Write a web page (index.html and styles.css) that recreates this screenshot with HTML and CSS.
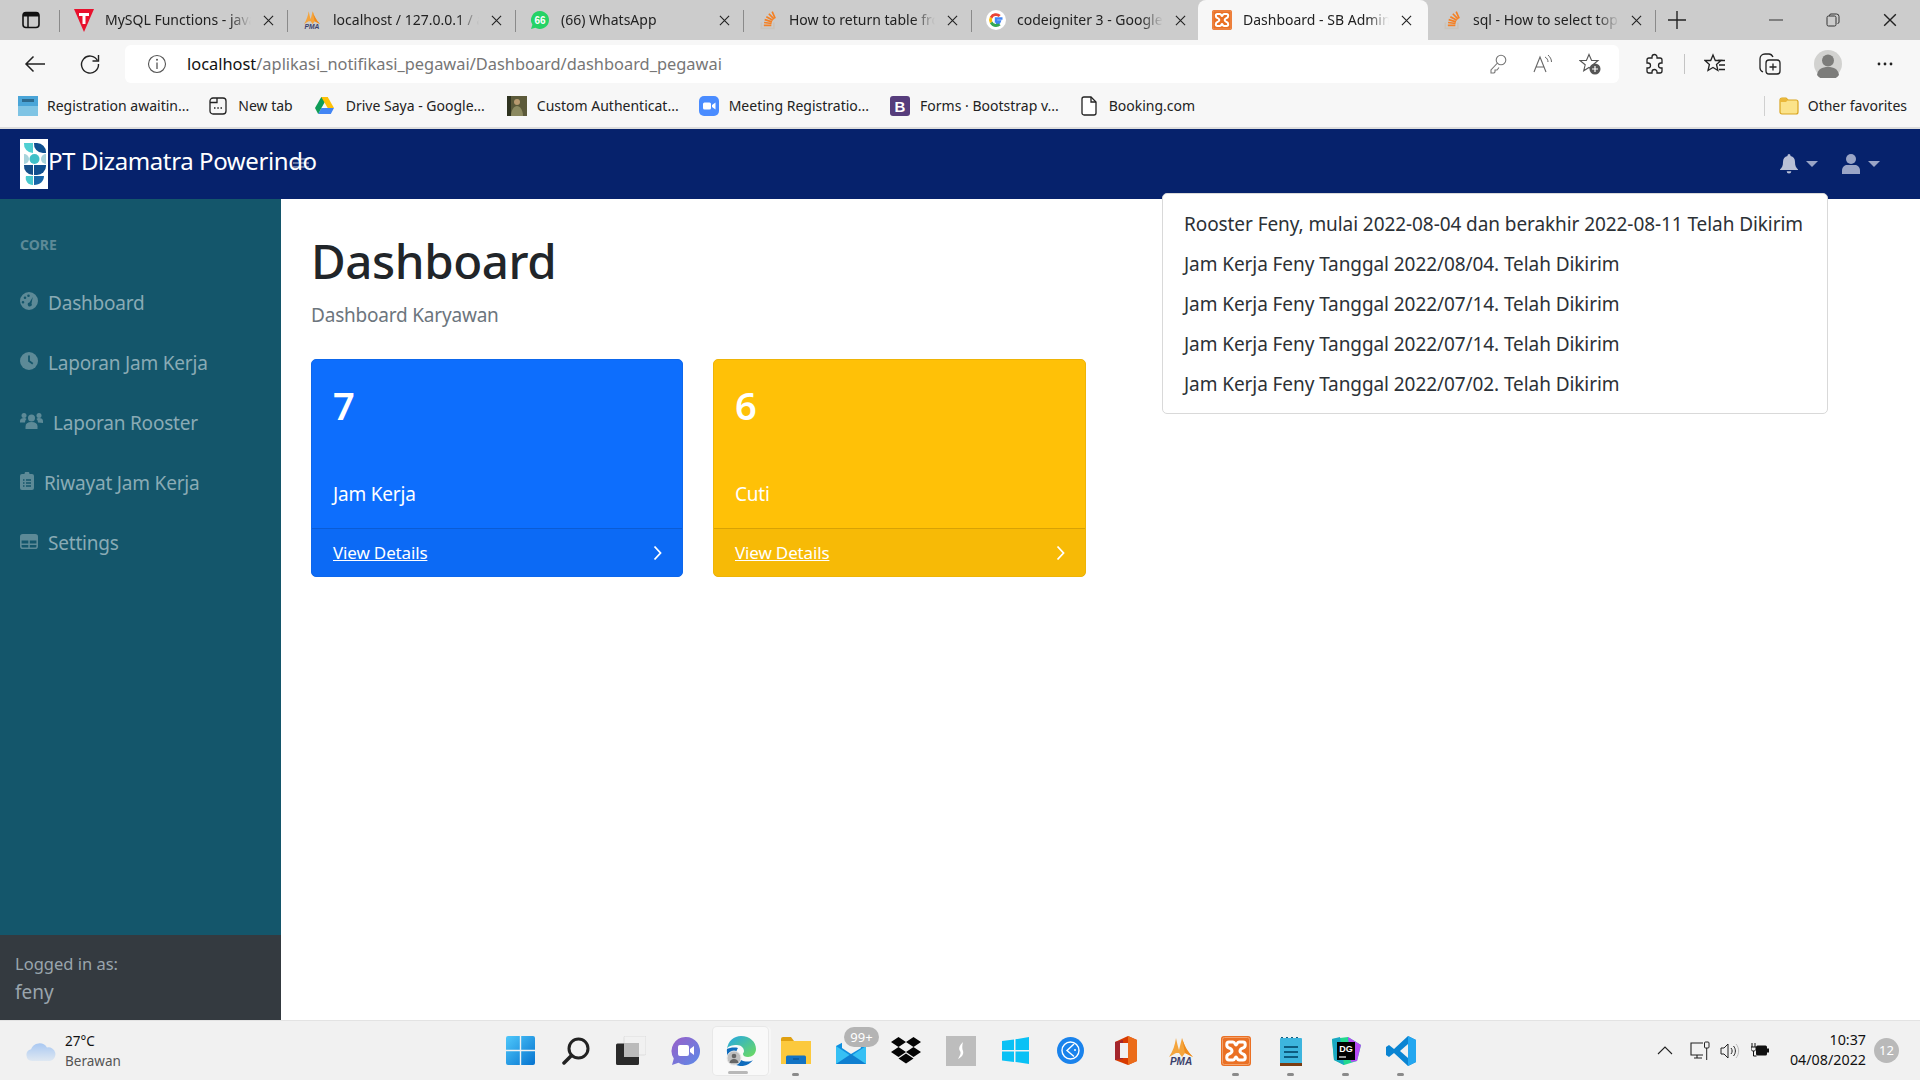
FILE: index.html
```html
<!DOCTYPE html>
<html>
<head>
<meta charset="utf-8">
<title>Dashboard - SB Admin</title>
<link rel="stylesheet" href="styles.css">
</head>
<body>
<svg class="defs" width="0" height="0">
  <symbol id="so" viewBox="0 0 24 24">
    <path d="M4 15v7h15v-7" fill="none" stroke="#c9c4bc" stroke-width="2"/>
    <path d="M7 18.500h9M7.300 15l9 1.200M8 11.500l8.800 2.700M10 8l7.800 4.400M13 4.500l6.300 6.500M17 2l3.600 8" fill="none" stroke="#f48024" stroke-width="2"/>
  </symbol>
  <symbol id="pma" viewBox="0 0 30 30">
    <path d="M3 21C7 15 9 9 10 2c1 5 2 9 3 12 1-4 2-8 3-12 2 7 5 13 11 19l-8-4-3 4-3-4-3 0z" fill="#f4a43c"/>
    <path d="M16 2c2 7 5 13 11 19l-8-4z" fill="#ee8a1c"/>
    <text x="15" y="29" text-anchor="middle" class="pma-text">PMA</text>
  </symbol>
  <symbol id="xampp" viewBox="0 0 30 30">
    <rect width="30" height="30" rx="3" fill="#ea7024"/>
    <rect x="1.500" y="1.500" width="27" height="27" rx="2" fill="none" stroke="#f3a26c" stroke-width="1"/>
    <path d="M8 6h4c2 0 2 3 3 3s1-3 3-3h4c3 0 3 5 0 6-1 .5-3 1-3 3s2 2.500 3 3c3 1 3 6 0 6h-4c-2 0-2-3-3-3s-1 3-3 3H8c-3 0-3-5 0-6 1-.5 3-1 3-3s-2-2.500-3-3C5 11 5 6 8 6z" fill="none" stroke="#fff" stroke-width="3"/>
  </symbol>
  <symbol id="caret" viewBox="0 0 12 6"><path d="M0 0h12L6 6z"/></symbol>
  <symbol id="x" viewBox="0 0 12 12"><path d="M1 1l10 10M11 1L1 11" fill="none" stroke="#222" stroke-width="1.200"/></symbol>
  <symbol id="chev" viewBox="0 0 9 16"><path d="M1.500 1.500L7.500 8l-6 6.500" fill="none" stroke="#fff" stroke-width="1.800"/></symbol>
</svg>

<div class="tabstrip">
  <div class="tabmenu">
    <svg width="18" height="18" viewBox="0 0 18 18"><rect x="1" y="1.500" width="16" height="15" rx="3" fill="none" stroke="#111" stroke-width="1.600"/><path d="M1 3.500a2 2 0 012-2h12a2 2 0 012 2v2H1z" fill="#111"/><path d="M6 5v11" stroke="#111" stroke-width="1.500"/></svg>
  </div>
  <div class="tab">
    <svg width="20" height="24" viewBox="0 0 20 24"><path d="M0 1h20L10 24z" fill="#e8112d"/><path d="M5 5h10v3h-3.500v8h-3V8H5z" fill="#fff"/></svg>
    <span class="tabname">MySQL Functions - javatpoint</span>
    <svg class="tabx" width="11" height="11"><use href="#x"/></svg>
  </div>
  <div class="tab">
    <svg width="20" height="22"><use href="#pma"/></svg>
    <span class="tabname">localhost / 127.0.0.1 / aplikasi</span>
    <svg class="tabx" width="11" height="11"><use href="#x"/></svg>
  </div>
  <div class="tab">
    <svg width="20" height="20" viewBox="0 0 20 20"><path d="M10 1a9 9 0 00-7.600 13.800L1 19l4.300-1.300A9 9 0 1010 1z" fill="#25d366"/><text x="10" y="13.500" text-anchor="middle" class="wa-text">66</text></svg>
    <span class="tabname">(66) WhatsApp</span>
    <svg class="tabx" width="11" height="11"><use href="#x"/></svg>
  </div>
  <div class="tab">
    <svg width="20" height="20"><use href="#so"/></svg>
    <span class="tabname">How to return table from a function</span>
    <svg class="tabx" width="11" height="11"><use href="#x"/></svg>
  </div>
  <div class="tab tab-noline">
    <svg width="20" height="20" viewBox="0 0 20 20"><circle cx="10" cy="10" r="10" fill="#fff"/><path d="M16.500 8.500H10v3h3.700a4 4 0 01-3.700 2.500" fill="none" stroke="#4285f4" stroke-width="2.400"/><path d="M10 14a4 4 0 01-3.700-2.500l-2.400 1.800A7 7 0 0010 17a7 7 0 004.700-1.800l-2-1.700" fill="#34a853"/><path d="M6.300 11.500a4 4 0 010-3L3.900 6.700a7 7 0 000 6.600z" fill="#fbbc05"/><path d="M6.300 8.500A4 4 0 0112.700 7l2-2A7 7 0 003.900 6.700z" fill="#ea4335"/></svg>
    <span class="tabname">codeigniter 3 - Google Search</span>
    <svg class="tabx" width="11" height="11"><use href="#x"/></svg>
  </div>
  <div class="tab tab-active">
    <svg width="20" height="20"><use href="#xampp"/></svg>
    <span class="tabname">Dashboard - SB Admin</span>
    <svg class="tabx" width="11" height="11"><use href="#x"/></svg>
  </div>
  <div class="tab">
    <svg width="20" height="20"><use href="#so"/></svg>
    <span class="tabname">sql - How to select top 1 row</span>
    <svg class="tabx" width="11" height="11"><use href="#x"/></svg>
  </div>
  <div class="newtab">
    <svg width="18" height="18" viewBox="0 0 18 18"><path d="M9 0v18M0 9h18" stroke="#222" stroke-width="1.400"/></svg>
  </div>
  <div class="winbtns">
    <svg width="14" height="14" viewBox="0 0 14 14"><path d="M0 7h14" stroke="#333" stroke-width="1"/></svg>
    <svg width="14" height="14" viewBox="0 0 14 14"><rect x="1" y="3" width="9" height="10" rx="1.500" fill="none" stroke="#333"/><path d="M3.500 3V2.500A1.500 1.500 0 015 1h5.500A2.500 2.500 0 0113 3.500V9a1.500 1.500 0 01-1.500 1.500" fill="none" stroke="#333"/></svg>
    <svg width="14" height="14"><use href="#x"/></svg>
  </div>
</div>

<div class="toolbar">
  <svg class="nav-back" width="22" height="18" viewBox="0 0 22 18"><path d="M21 9H2M9.500 1.500L2 9l7.500 7.500" fill="none" stroke="#222" stroke-width="1.500"/></svg>
  <svg class="nav-reload" width="22" height="22" viewBox="0 0 22 22"><path d="M18.500 7.500A8.500 8.500 0 1019.500 11" fill="none" stroke="#222" stroke-width="1.400"/><path d="M19.500 2v6h-6" fill="none" stroke="#222" stroke-width="1.400"/></svg>
  <div class="addressbar">
    <svg class="info" width="20" height="20" viewBox="0 0 20 20"><circle cx="10" cy="10" r="8.500" fill="none" stroke="#555" stroke-width="1.100"/><path d="M10 8.500V15" stroke="#555" stroke-width="1.300"/><circle cx="10" cy="5.800" r="1" fill="#555"/></svg>
    <span class="url"><span class="url-host">localhost</span>/aplikasi_notifikasi_pegawai/Dashboard/dashboard_pegawai</span>
    <svg class="addr-ico" width="18" height="20" viewBox="0 0 18 20"><circle cx="12" cy="6" r="4.800" fill="none" stroke="#777" stroke-width="1.100"/><path d="M8.500 9L2 16v3h3l1-1v-2h2l2-2.500" fill="none" stroke="#777" stroke-width="1.100"/></svg>
    <svg class="addr-ico" width="20" height="20" viewBox="0 0 20 20"><path d="M1 18L7 3l6 15M3.300 13h7.500" fill="none" stroke="#666" stroke-width="1.100"/><path d="M12 3c2 1 3 3 3 5M15 1c2 2 3.500 4 3.500 7" fill="none" stroke="#666" stroke-width="1"/></svg>
    <svg class="addr-ico" width="22" height="22" viewBox="0 0 22 22"><path d="M10 1.500l2.600 6h6.400l-5 4.300 1.500 6-5.500-3.300-5.300 3.300 1.500-6L1 7.500h6.400z" fill="none" stroke="#555" stroke-width="1.100"/><circle cx="16" cy="16" r="5.500" fill="#555"/><path d="M16 13v6M13 16h6" stroke="#fff" stroke-width="1.200"/></svg>
  </div>
  <svg class="tool-ext" width="20" height="22" viewBox="0 0 20 22"><path d="M8 4a2.500 2.500 0 015 0v1h3a2 2 0 012 2v3h-1a2.500 2.500 0 000 5h1v3a2 2 0 01-2 2h-3v-1a2.500 2.500 0 00-5 0v1H5a2 2 0 01-2-2v-3h1a2.500 2.500 0 000-5H3V7a2 2 0 012-2h3z" fill="none" stroke="#222" stroke-width="1.300"/></svg>
  <span class="tool-sep"></span>
  <svg class="tool-fav" width="22" height="22" viewBox="0 0 22 22"><path d="M9 2l2.300 5.500H17l-4.500 4 1.400 6L9 14.500 4 17.500l1.400-6L1 7.500h5.700z" fill="none" stroke="#222" stroke-width="1.300"/><path d="M14 7.500h7M15 12h6M15 16.500h6" stroke="#222" stroke-width="1.300"/></svg>
  <svg class="tool-coll" width="22" height="24" viewBox="0 0 22 24"><rect x="7" y="8" width="14" height="14" rx="3" fill="none" stroke="#222" stroke-width="1.300"/><path d="M14 11.500v7M10.500 15h7" stroke="#222" stroke-width="1.300"/><path d="M4 20c-2-1-3-2-3-4V7c0-3 2-5 5-5h4c2 0 3 1 4 3" fill="none" stroke="#222" stroke-width="1.300"/></svg>
  <svg class="tool-user" width="28" height="28" viewBox="0 0 28 28"><circle cx="14" cy="14" r="14" fill="#d2d2d0"/><circle cx="14" cy="10.500" r="6" fill="#7c7c7a"/><path d="M3 25c1-6 5-8 11-8s10 2 11 8a14 14 0 01-22 0z" fill="#7c7c7a"/></svg>
  <svg class="tool-dots" width="16" height="4" viewBox="0 0 16 4"><circle cx="2" cy="2" r="1.400" fill="#222"/><circle cx="8" cy="2" r="1.400" fill="#222"/><circle cx="14" cy="2" r="1.400" fill="#222"/></svg>
</div>

<div class="bookmarks">
  <a class="bm bm-reg"><svg width="20" height="20" viewBox="0 0 20 20"><rect width="20" height="20" fill="#4aa5d8"/><rect y="10" width="20" height="10" fill="#7fc4e4"/><rect x="4" y="3" width="12" height="3" fill="#2d6b8f"/></svg>Registration awaitin...</a>
  <a class="bm bm-new"><svg width="18" height="18" viewBox="0 0 18 18"><rect x="1" y="1" width="16" height="16" rx="3" fill="none" stroke="#222" stroke-width="1.300"/><path d="M1 5.500h7V1" fill="none" stroke="#222" stroke-width="1.300"/><path d="M5 11h1.500M8.300 11h1.500M11.500 11H13" stroke="#222" stroke-width="1.500"/></svg>New tab</a>
  <a class="bm bm-drive"><svg width="19" height="17" viewBox="0 0 19 17"><path d="M6.300 0h6.400l-6.300 11H0z" fill="#0f9d58"/><path d="M12.700 0L19 11h-6.300L6.300 0z" fill="#ffc107"/><path d="M3.200 17L6.400 11H19l-3.200 6z" fill="#4285f4"/><path d="M0 11h6.400l-3.200 6z" fill="#0f9d58"/></svg>Drive Saya - Google...</a>
  <a class="bm bm-custom"><svg width="20" height="20" viewBox="0 0 20 20"><rect width="20" height="20" fill="#5c5a3a"/><circle cx="10" cy="6" r="3" fill="#b89a70"/><path d="M4 20c0-6 3-10 6-10s6 4 6 10z" fill="#8c8a60"/><rect width="4" height="20" fill="#2f3320"/></svg>Custom Authenticat...</a>
  <a class="bm bm-zoom"><svg width="20" height="20" viewBox="0 0 20 20"><rect width="20" height="20" rx="5" fill="#4a8cff"/><rect x="4" y="6.500" width="8" height="7" rx="1.500" fill="#fff"/><path d="M13 9l3.500-2.500v7L13 11z" fill="#fff"/></svg>Meeting Registratio...</a>
  <a class="bm bm-boot"><svg width="20" height="20" viewBox="0 0 20 20"><rect width="20" height="20" rx="3" fill="#563d7c"/><text x="10" y="15.500" text-anchor="middle" class="boot-text">B</text></svg>Forms · Bootstrap v...</a>
  <a class="bm bm-doc"><svg width="16" height="20" viewBox="0 0 16 20"><path d="M1 3a2 2 0 012-2h7l5 5v11a2 2 0 01-2 2H3a2 2 0 01-2-2z" fill="#fff" stroke="#222" stroke-width="1.300"/><path d="M10 1v5h5" fill="none" stroke="#222" stroke-width="1.300"/></svg>Booking.com</a>
  <span class="bm-sep"></span>
  <a class="bm bm-other"><svg width="20" height="18" viewBox="0 0 20 18"><path d="M1 3a2 2 0 012-2h4l2 2h8a2 2 0 012 2v10a2 2 0 01-2 2H3a2 2 0 01-2-2z" fill="#fbe38a" stroke="#d9a520" stroke-width="1.200"/><path d="M1 5V3a2 2 0 012-2h4l2 2-2 2z" fill="#eab83a"/></svg>Other favorites</a>
</div>

<nav class="navbar">
  <div class="logo">
    <svg width="28" height="50" viewBox="0 0 28 50">
      <rect width="28" height="50" fill="#fff"/>
      <path d="M4 4h9v10a9 9 0 01-9-10z" fill="#4fcfd2"/>
      <path d="M14 4h3a9 9 0 019 9v1h-3a9 9 0 01-9-10z" fill="#0f4f8f"/>
      <path d="M4 15a5 5 0 015 5 5 5 0 01-5 5z" fill="#a8d4dc"/>
      <circle cx="14.500" cy="20" r="5" fill="#3fc0c8"/>
      <path d="M26 15a5 5 0 00-5 5 5 5 0 005 5z" fill="#a8d4dc"/>
      <path d="M4 26h9v10a9 9 0 01-9-10z" fill="#154f8a"/>
      <path d="M14 26h12v1a9 9 0 01-9 9h-3z" fill="#0f4f8f"/>
      <path d="M6 37h7v9a7 7 0 01-7-9z" fill="#49c9cd"/>
      <path d="M14 37h10c0 5-4 9-10 9z" fill="#1766a8"/>
    </svg>
  </div>
  <a class="brand">PT Dizamatra Powerindo</a>
  <svg class="toggle" width="16" height="12" viewBox="0 0 16 12"><path d="M0 2h16M0 6h16M0 10h16" stroke="#fff" stroke-opacity=".5" stroke-width="1.600"/></svg>
  <div class="nav-right">
    <a class="nav-ico">
      <svg width="18" height="20" viewBox="0 0 18 20"><path d="M9 0a1.500 1.500 0 011.500 1.500v.6C13.500 2.800 15 5 15 8c0 4 1 5.500 3 7.500V16H0v-.5C2 13.500 3 12 3 8c0-3 1.500-5.200 4.500-5.900v-.6A1.500 1.500 0 019 0z" fill="#b9c0d6"/><path d="M6.700 17.300h4.600a2.300 2.300 0 01-4.600 0z" fill="#b9c0d6"/></svg>
      <svg class="nav-caret" width="12" height="6"><use href="#caret"/></svg>
    </a>
    <a class="nav-ico">
      <svg width="18" height="20" viewBox="0 0 18 20"><circle cx="9" cy="5" r="5" fill="#9aa5c6"/><path d="M5 11h8c3 0 5 2.500 5 5.500V20H0v-3.500C0 13.500 2 11 5 11z" fill="#9aa5c6"/></svg>
      <svg class="nav-caret" width="12" height="6"><use href="#caret"/></svg>
    </a>
  </div>
  <ul class="dropdown">
    <li>Rooster Feny, mulai 2022-08-04 dan berakhir 2022-08-11 Telah Dikirim</li>
    <li>Jam Kerja Feny Tanggal 2022/08/04. Telah Dikirim</li>
    <li>Jam Kerja Feny Tanggal 2022/07/14. Telah Dikirim</li>
    <li>Jam Kerja Feny Tanggal 2022/07/14. Telah Dikirim</li>
    <li>Jam Kerja Feny Tanggal 2022/07/02. Telah Dikirim</li>
  </ul>
</nav>

<div class="app">
  <aside class="sidebar">
    <div class="menu">
      <div class="menu-heading">CORE</div>
      <a class="menu-link">
        <svg width="18" height="18" viewBox="0 0 18 18"><path d="M9 0a9 9 0 110 18A9 9 0 019 0zM5 4.500a1.300 1.300 0 100 2.600 1.300 1.300 0 000-2.600zm3.500-2a1.300 1.300 0 100 2.600 1.300 1.300 0 000-2.600zM3 9a1.300 1.300 0 100 2.600A1.300 1.300 0 003 9zm9.800-4L9.500 10.400a2 2 0 102 1z" fill="#5d8a97" fill-rule="evenodd"/></svg>
        Dashboard
      </a>
      <a class="menu-link">
        <svg width="18" height="18" viewBox="0 0 18 18"><circle cx="9" cy="9" r="9" fill="#5d8a97"/><path d="M9 3.500V9l3.800 2.800" fill="none" stroke="#14566b" stroke-width="1.800"/></svg>
        Laporan Jam Kerja
      </a>
      <a class="menu-link menu-wide">
        <svg width="23" height="18" viewBox="0 0 23 18"><circle cx="11.500" cy="6" r="3.500" fill="#5d8a97"/><circle cx="4" cy="3.500" r="2.500" fill="#5d8a97"/><circle cx="19" cy="3.500" r="2.500" fill="#5d8a97"/><path d="M5.500 17v-2.500c0-3 2-4.500 6-4.500s6 1.500 6 4.500V17z" fill="#5d8a97"/><path d="M0 11V9c0-2 1.500-3 4-3 1 0 2 .3 2.500 1A5 5 0 005 10.500H0zM23 11V9c0-2-1.500-3-4-3-1 0-2 .3-2.500 1a5 5 0 011.500 3.500z" fill="#5d8a97"/></svg>
        Laporan Rooster
      </a>
      <a class="menu-link menu-narrow">
        <svg width="14" height="18" viewBox="0 0 14 18"><path d="M2 2h2.500a2.500 2.500 0 015 0H12a2 2 0 012 2v12a2 2 0 01-2 2H2a2 2 0 01-2-2V4a2 2 0 012-2z" fill="#5d8a97"/><path d="M3 8h1.500M6 8h5M3 11h1.500M6 11h5M3 14h1.500M6 14h5" stroke="#14566b" stroke-width="1.300"/></svg>
        Riwayat Jam Kerja
      </a>
      <a class="menu-link">
        <svg width="18" height="15" viewBox="0 0 18 15"><rect x=".8" y=".8" width="16.400" height="13.400" rx="2" fill="none" stroke="#5d8a97" stroke-width="1.600"/><path d="M0 5h18v1.500H0zM8.300 5h1.500v9H8.300zM0 9.500h18V11H0z" fill="#5d8a97"/><rect x="1" y="1" width="16" height="4" fill="#5d8a97"/></svg>
        Settings
      </a>
    </div>
    <div class="sidebar-footer">
      <div class="footer-small">Logged in as:</div>
      <div>feny</div>
    </div>
  </aside>

  <main class="content">
    <h1>Dashboard</h1>
    <div class="subtitle">Dashboard Karyawan</div>
    <div class="cards">
      <div class="card card-blue">
        <div class="card-body">
          <div class="card-num">7</div>
          <div class="card-label">Jam Kerja</div>
        </div>
        <div class="card-footer">
          <a>View Details</a>
          <svg width="9" height="16"><use href="#chev"/></svg>
        </div>
      </div>
      <div class="card card-yellow">
        <div class="card-body">
          <div class="card-num">6</div>
          <div class="card-label">Cuti</div>
        </div>
        <div class="card-footer">
          <a>View Details</a>
          <svg width="9" height="16"><use href="#chev"/></svg>
        </div>
      </div>
    </div>
  </main>
</div>

<footer class="taskbar">
  <div class="weather">
    <svg width="30" height="20" viewBox="0 0 30 20"><defs><linearGradient id="cl" x1="0" y1="0" x2="0" y2="1"><stop offset="0" stop-color="#a9c8f2"/><stop offset="1" stop-color="#dfe8f2"/></linearGradient></defs><path d="M6 20a6 6 0 01-1-11.800A9 9 0 0121 6.500 6.800 6.800 0 0124 20z" fill="url(#cl)"/></svg>
    <div class="weather-text">
      <div>27°C</div>
      <div class="weather-desc">Berawan</div>
    </div>
  </div>
  <div class="apps">
    <div class="app-ico"><svg width="29" height="29" viewBox="0 0 29 29"><defs><linearGradient id="win" x1="0" y1="0" x2="1" y2="1"><stop offset="0" stop-color="#4fc8fb"/><stop offset="1" stop-color="#0673cf"/></linearGradient></defs><path d="M0 2a2 2 0 012-2h11.800v13.800H0zM15.200 0H27a2 2 0 012 2v11.800H15.200zM0 15.200h13.800V29H2a2 2 0 01-2-2zM15.200 15.200H29V27a2 2 0 01-2 2H15.200z" fill="url(#win)"/></svg></div>
    <div class="app-ico"><svg width="28" height="28" viewBox="0 0 28 28"><circle cx="16.500" cy="11.500" r="9.500" fill="none" stroke="#222" stroke-width="3"/><path d="M9.500 18.500L2 26" stroke="#222" stroke-width="3.500" stroke-linecap="round"/></svg></div>
    <div class="app-ico"><svg width="30" height="29" viewBox="0 0 30 29"><rect x="8" y="0" width="22" height="19" rx="1.500" fill="#f1f1f1" stroke="#ddd"/><rect x="8" y="7" width="15" height="14" fill="#bbb"/><path d="M0 9a1.500 1.500 0 011.500-1.500H8V21h15v6.500a1.500 1.500 0 01-1.500 1.500h-20A1.500 1.500 0 010 27.500z" fill="#2a2a2a"/></svg></div>
    <div class="app-ico"><svg width="30" height="30" viewBox="0 0 30 30"><defs><linearGradient id="chat" x1="0" y1="0" x2="1" y2="1"><stop offset="0" stop-color="#9a5fc8"/><stop offset="1" stop-color="#5b8ae8"/></linearGradient></defs><path d="M15 1a14 14 0 11-7.500 25.800L1 29l1.800-6.500A14 14 0 0115 1z" fill="url(#chat)"/><rect x="7" y="9" width="11" height="11" rx="2" fill="#fff"/><path d="M19 13l4-3v9l-4-3z" fill="#fff"/></svg></div>
    <div class="app-ico app-active">
      <svg width="30" height="30" viewBox="0 0 30 30"><defs><linearGradient id="edge" x1="0" y1="0" x2="1" y2="1"><stop offset="0" stop-color="#23a6e8"/><stop offset="1" stop-color="#6fdc5a"/></linearGradient></defs><path d="M1 13C2 5 8 0 15 0c9 0 15 6 15 13 0 5-4 8-8 8-3 0-5-1-5-3 0-1 1-1.500 1-3 0-3-3-6-7-6C6 9 2 10 1 13z" fill="url(#edge)"/><path d="M1 13c-1 8 4 16 13 17 6 .5 10-2 13-6-3 2-8 2-12 0-5-2-6-8-3-12-4-1-9 0-11 1z" fill="#0f6cbd"/><circle cx="8" cy="22" r="7" fill="#bfbfbf" stroke="#e8e8e8"/><circle cx="8" cy="20" r="2.300" fill="#666"/><path d="M3.500 27c.5-3 2-4 4.500-4s4 1 4.500 4z" fill="#666"/></svg>
      <span class="active-bar"></span>
    </div>
    <div class="app-ico app-run"><svg width="30" height="27" viewBox="0 0 30 27"><path d="M0 2a2 2 0 012-2h8l3 4H0z" fill="#e0a010"/><rect y="4" width="30" height="23" fill="#fcc93d"/><path d="M5 20a1.500 1.500 0 011.500-1.500h17A1.500 1.500 0 0125 20v7H5z" fill="#1273c4"/><path d="M12 22h6" stroke="#0a4f8c" stroke-width="1.200"/></svg></div>
    <div class="app-ico mail">
      <svg width="30" height="26" viewBox="0 0 30 26"><path d="M0 8l15-8 15 8v18H0z" fill="#0f8fdf"/><path d="M6 3l16-1 3 8-10 6-9-6z" fill="#f1f1f1"/><path d="M0 8l15 10L30 8v18H0z" fill="#36c0f4"/><path d="M0 26l15-10 15 10z" fill="#0f7fd0"/></svg>
      <span class="badge-99">99+</span>
    </div>
    <div class="app-ico"><svg width="30" height="27" viewBox="0 0 30 27"><path d="M7.500 0L15 5 7.500 10 0 5zM22.500 0L30 5l-7.500 5L15 5zM7.500 10L15 15l-7.500 5L0 15zM22.500 10l7.500 5-7.500 5L15 15zM7.500 21.500l7.500-5 7.500 5-7.500 5z" fill="#050505"/></svg></div>
    <div class="app-ico"><svg width="30" height="30" viewBox="0 0 30 30"><rect width="30" height="30" fill="#bdbdbd"/><path d="M17 6c-3 3-5 6-3 9 1 1.500 1 3-2 8 4-2 6-5 5-8-1-2-1-5 0-9z" fill="#fff"/></svg></div>
    <div class="app-ico"><svg width="27" height="27" viewBox="0 0 27 27"><path d="M0 4l12-1.500V13H0zM13.500 2.300L27 0v13H13.500zM0 14.500h12v10.500L0 23.500zM13.500 14.500H27V27l-13.500-2z" fill="#0ac1f5"/></svg></div>
    <div class="app-ico"><svg width="27" height="27" viewBox="0 0 27 27"><circle cx="13.500" cy="13.500" r="13.500" fill="#1a83ec"/><circle cx="13.500" cy="13.500" r="8.500" fill="none" stroke="#fff" stroke-width="1.400"/><path d="M17 7l-7 6.500 7 6" fill="none" stroke="#fff" stroke-width="1.400"/><circle cx="18" cy="13" r="1" fill="#fff"/></svg></div>
    <div class="app-ico"><svg width="22" height="29" viewBox="0 0 22 29"><path d="M0 6l13-6 9 4v21l-9 4-13-5z" fill="#d83b01"/><path d="M13 0l9 4v21l-9 4z" fill="#eb6c1a"/><path d="M0 6l8-2v19l-8 1z" fill="#a4262c"/><rect x="5" y="7" width="8" height="15" fill="#f1f1f1"/></svg></div>
    <div class="app-ico"><svg width="30" height="30"><use href="#pma"/></svg></div>
    <div class="app-ico app-run"><svg width="30" height="30"><use href="#xampp"/></svg></div>
    <div class="app-ico app-run"><svg width="22" height="30" viewBox="0 0 22 30"><rect y="2" width="22" height="28" rx="1" fill="#3db5de"/><rect y="27" width="22" height="3" fill="#7b3c12"/><path d="M2 2v-1M7 2v-1M12 2v-1M17 2v-1" stroke="#0d5c80" stroke-width="2"/><path d="M4 11h14M4 16h14M4 21h14" stroke="#0d5c80" stroke-width="2"/></svg></div>
    <div class="app-ico app-run"><svg width="30" height="30" viewBox="0 0 30 30"><path d="M1 3l16-2 13 8-4 16-13 4L3 24z" fill="#22d88f"/><path d="M17 1l13 8-4 16-6 1z" fill="#b74af7"/><path d="M1 3l8-2 4 28-10-5z" fill="#1aa8c4"/><rect x="6" y="6" width="18" height="18" fill="#000"/><text x="15" y="16" text-anchor="middle" class="dg-text">DG</text><path d="M8 21h7" stroke="#fff" stroke-width="1.200"/></svg></div>
    <div class="app-ico app-run"><svg width="30" height="30" viewBox="0 0 30 30"><path d="M22 0l8 4v22l-8 4L8 17l-5 4-3-2V11l3-2 5 4z" fill="#0a84d2"/><path d="M22 0l8 4v22l-8 4z" fill="#24a7f0"/><path d="M22 8v14l-8-7z" fill="#f1f1f1"/></svg></div>
  </div>
  <div class="tray">
    <svg class="tray-up" width="16" height="9" viewBox="0 0 16 9"><path d="M1 8l7-7 7 7" fill="none" stroke="#222" stroke-width="1.100"/></svg>
    <svg class="tray-net" width="20" height="20" viewBox="0 0 20 20"><path d="M13 2H1v12h12M4 17h8M7 14v3" fill="none" stroke="#222" stroke-width="1.100"/><rect x="14.500" y="1" width="4.500" height="6" rx="1" fill="none" stroke="#222"/><path d="M16.700 7v12" stroke="#222"/></svg>
    <svg class="tray-vol" width="20" height="16" viewBox="0 0 20 16"><path d="M1 5h3l4-4v14l-4-4H1z" fill="none" stroke="#222" stroke-width="1"/><path d="M11 5c1.500 2 1.500 4 0 6M13.500 3c2.500 3 2.500 7 0 10" fill="none" stroke="#222" stroke-width="1"/><path d="M16 1c3.500 4 3.500 10 0 14" fill="none" stroke="#bbb"/></svg>
    <svg class="tray-bat" width="18" height="15" viewBox="0 0 18 15"><path d="M1 0v4M4 0v4M0 4h5v2c0 1-1 2-2.500 2S0 7 0 6zM2.500 8v5h3" fill="none" stroke="#111" stroke-width="1"/><rect x="5" y="2.500" width="11" height="10" rx="1.500" fill="#111"/><rect x="16" y="5.500" width="2" height="4" fill="#111"/></svg>
    <div class="clock">
      <div>10:37</div>
      <div>04/08/2022</div>
    </div>
    <span class="notif">12</span>
  </div>
</footer>
</body>
</html>
```
FILE: styles.css
```css
* {
    box-sizing: border-box;
}
html, body {
    margin: 0;
    height: 100%;
}
body {
    display: flex;
    flex-direction: column;
    height: 100vh;
    overflow: hidden;
    font-family: "Noto Sans", "Open Sans", sans-serif;
    background: #fff;
    color: #212529;
}
svg {
    display: block;
    flex: none;
}
.defs {
    position: absolute;
}
.pma-text {
    font: italic bold 10px "Liberation Sans", sans-serif;
    fill: #3b3f6b;
}
.wa-text {
    font: bold 10px "Liberation Sans", sans-serif;
    fill: #fff;
}
.boot-text {
    font: bold 15px "Liberation Sans", sans-serif;
    fill: #fff;
}
.dg-text {
    font: bold 9px "Liberation Sans", sans-serif;
    fill: #fff;
}

/* browser chrome */
.tabstrip {
    display: flex;
    align-items: stretch;
    height: 40px;
    background: #ccc;
    font-size: 14px;
    color: #222;
}
.tabmenu {
    display: flex;
    align-items: center;
    width: 60px;
    padding-left: 22px;
    position: relative;
}
.tabmenu::after, .tab::after {
    content: "";
    position: absolute;
    right: 0;
    top: 10px;
    height: 22px;
    border-right: 1px solid #8a8a8a;
}
.tab {
    position: relative;
    display: flex;
    align-items: center;
    width: 228px;
    padding-left: 14px;
}
.tab-noline {
    width: 226px;
}
.tab-noline::after, .tab-active::after {
    display: none;
}
.tab-active {
    width: 230px;
    background: #f7f7f7;
    border-radius: 8px 8px 0 0;
}
.tabname {
    width: 146px;
    margin: -2px 0 0 11px;
    overflow: hidden;
    white-space: nowrap;
    -webkit-mask-image: linear-gradient(to right, #000 85%, transparent);
    mask-image: linear-gradient(to right, #000 85%, transparent);
}
.tabx {
    margin-left: 12px;
}
.newtab {
    display: flex;
    align-items: center;
    padding-left: 12px;
    width: 58px;
}
.winbtns {
    display: flex;
    align-items: center;
    gap: 43px;
    margin-left: 55px;
}
.toolbar {
    display: flex;
    align-items: center;
    height: 47px;
    background: #f7f7f7;
    padding: 5px 0 4px;
}
.nav-back {
    margin-left: 24px;
}
.nav-reload {
    margin-left: 33px;
}
.addressbar {
    display: flex;
    align-items: center;
    width: 1494px;
    height: 38px;
    margin-left: 24px;
    background: #fff;
    border-radius: 6px;
}
.info {
    margin-left: 22px;
}
.url {
    margin: -2px 0 0 20px;
    font-size: 16.400px;
    color: #767676;
    flex: 1;
}
.url-host {
    color: #111;
}
.addr-ico {
    margin-right: 26px;
}
.addr-ico:last-child {
    margin-right: 18px;
}
.tool-ext {
    margin-left: 25px;
}
.tool-sep {
    width: 1px;
    height: 20px;
    margin-left: 20px;
    background: #c4c4c4;
}
.tool-fav {
    margin-left: 19px;
}
.tool-coll {
    margin-left: 33px;
}
.tool-user {
    margin-left: 33px;
}
.tool-dots {
    margin-left: 35px;
}
.bookmarks {
    display: flex;
    align-items: center;
    height: 42px;
    padding: 0 0 3px 18px;
    background: #f7f7f7;
    border-bottom: 2px solid #ddd;
    font-size: 14px;
    color: #222;
}
.bm {
    display: flex;
    align-items: center;
    gap: 9px;
    white-space: nowrap;
}
.bm-new {
    margin-left: 20px;
    gap: 11px;
}
.bm-drive {
    margin-left: 22px;
    gap: 12px;
}
.bm-custom {
    margin-left: 22px;
    gap: 10px;
}
.bm-zoom {
    margin-left: 20px;
    gap: 10px;
}
.bm-boot {
    margin-left: 21px;
    gap: 10px;
}
.bm-doc {
    margin-left: 22px;
    gap: 12px;
}
.bm-sep {
    width: 1px;
    height: 20px;
    margin-left: auto;
    background: #d0d0d0;
}
.bm-other {
    margin-left: 14px;
    margin-right: 13px;
}

/* site navbar */
.navbar {
    position: relative;
    display: flex;
    align-items: center;
    flex: none;
    height: 70px;
    padding-left: 20px;
    background: #06226c;
}
.logo {
    height: 50px;
}
.brand {
    margin-top: -7px;
    font-size: 24px;
    color: #fff;
    letter-spacing: -0.400px;
    white-space: nowrap;
}
.toggle {
    position: absolute;
    left: 293px;
    top: 28px;
}
.nav-right {
    display: flex;
    align-items: center;
    gap: 24px;
    margin-left: auto;
    margin-right: 40px;
}
.nav-ico {
    display: flex;
    align-items: center;
    gap: 8px;
}
.nav-caret {
    fill: #9aa5c6;
}
.dropdown {
    position: absolute;
    top: 64px;
    right: 92px;
    width: 666px;
    margin: 0;
    padding: 10px 0 9px;
    list-style: none;
    background: #fff;
    border: 1px solid #d9d9d9;
    border-radius: 5px;
    z-index: 5;
    font-size: 19px;
    letter-spacing: -0.080px;
    color: #2c3136;
}
.dropdown li {
    height: 40px;
    line-height: 40px;
    padding-left: 21px;
    white-space: nowrap;
}

/* page */
.app {
    display: flex;
    flex: 1;
    min-height: 0;
}
.sidebar {
    display: flex;
    flex-direction: column;
    width: 281px;
    background: #14566b;
}
.menu {
    flex: 1;
    padding: 0 20px;
}
.menu-heading {
    margin-top: 35px;
    margin-bottom: 20px;
    height: 22px;
    line-height: 22px;
    font-size: 14px;
    font-weight: 700;
    color: #5d8a97;
}
.menu-link {
    display: flex;
    align-items: center;
    gap: 10px;
    height: 60px;
    font-size: 19px;
    color: #8aabb5;
    letter-spacing: -0.200px;
    padding-bottom: 6px;
}
.menu-link svg {
    margin-top: -4px;
}
.sidebar-footer {
    height: 85px;
    padding: 16px 15px 0;
    background: #343a40;
    color: #9aa5ad;
    font-size: 19px;
    line-height: 30px;
}
.footer-small {
    font-size: 16.500px;
    line-height: 26px;
}
.content {
    flex: 1;
    padding: 27px 30px;
}
h1 {
    margin: 0;
    font-size: 47.500px;
    line-height: 70px;
    font-weight: 500;
    letter-spacing: -0.400px;
    color: #212529;
}
.subtitle {
    margin-top: 4px;
    font-size: 19px;
    line-height: 30px;
    color: #6c757d;
    letter-spacing: -0.200px;
}
.cards {
    display: flex;
    gap: 30px;
    margin-top: 29px;
}
.card {
    display: flex;
    flex-direction: column;
    width: 372px;
    height: 218px;
    border-radius: 5px;
    color: #fff;
}
.card + .card {
    width: 373px;
}
.card-blue {
    background: #0d6efd;
    border: 1px solid #0d67ec;
}
.card-yellow {
    background: #ffc107;
    border: 1px solid #eeb407;
}
.card-body {
    flex: 1;
    padding: 20px 20px 0 21px;
}
.card-num {
    font-size: 38px;
    line-height: 50px;
    font-weight: 600;
}
.card-label {
    margin-top: 49px;
    font-size: 19px;
    line-height: 30px;
    letter-spacing: -0.200px;
}
.card-footer {
    display: flex;
    align-items: center;
    justify-content: space-between;
    height: 48px;
    padding: 0 20px 0 21px;
    background: rgba(0, 0, 0, .03);
    border-top: 1px solid rgba(0, 0, 0, .125);
    font-size: 17px;
    letter-spacing: -0.150px;
}
.card-footer a {
    color: #fff;
    text-decoration: underline;
}

/* windows taskbar */
.taskbar {
    display: flex;
    align-items: center;
    flex: none;
    height: 60px;
    background: #f1f1f1;
    border-top: 1px solid #e3e3e3;
    font-size: 13.500px;
    color: #111;
}
.weather {
    display: flex;
    align-items: center;
    gap: 9px;
    width: 493px;
    padding-left: 26px;
}
.weather-text {
    line-height: 20px;
}
.weather-desc {
    color: #555;
}
.apps {
    display: flex;
    align-items: center;
}
.app-ico {
    position: relative;
    display: flex;
    align-items: center;
    justify-content: center;
    width: 55px;
    height: 48px;
}
.app-active {
    background: #f9f9f9;
    border-radius: 4px;
    box-shadow: 0 0 0 1px #e8e8e8, 3px 0 0 #f6f6f6;
}
.active-bar {
    position: absolute;
    left: 15px;
    bottom: 1px;
    width: 20px;
    height: 3px;
    border-radius: 2px;
    background: #b8b8b8;
}
.app-run::after {
    content: "";
    position: absolute;
    left: 24px;
    bottom: -1px;
    width: 7px;
    height: 3px;
    border-radius: 2px;
    background: #8a8a8a;
}
.badge-99 {
    position: absolute;
    top: 0;
    left: 21px;
    width: 35px;
    height: 20px;
    line-height: 20px;
    border-radius: 10px;
    background: #b4b4b4;
    color: #fff;
    text-align: center;
    font-size: 13px;
}
.tray {
    display: flex;
    align-items: center;
    flex: 1;
    padding-left: 229px;
}
.tray-net {
    margin-left: 17px;
}
.tray-vol {
    margin-left: 10px;
}
.tray-bat {
    margin-left: 11px;
}
.clock {
    margin-left: auto;
    margin-top: -2px;
    font-size: 14.300px;
    text-align: right;
    line-height: 20px;
}
.notif {
    width: 25px;
    height: 25px;
    margin: 0 21px 0 8px;
    line-height: 25px;
    border-radius: 50%;
    background: #b9b9b9;
    color: #fff;
    text-align: center;
    font-size: 13px;
}
```
